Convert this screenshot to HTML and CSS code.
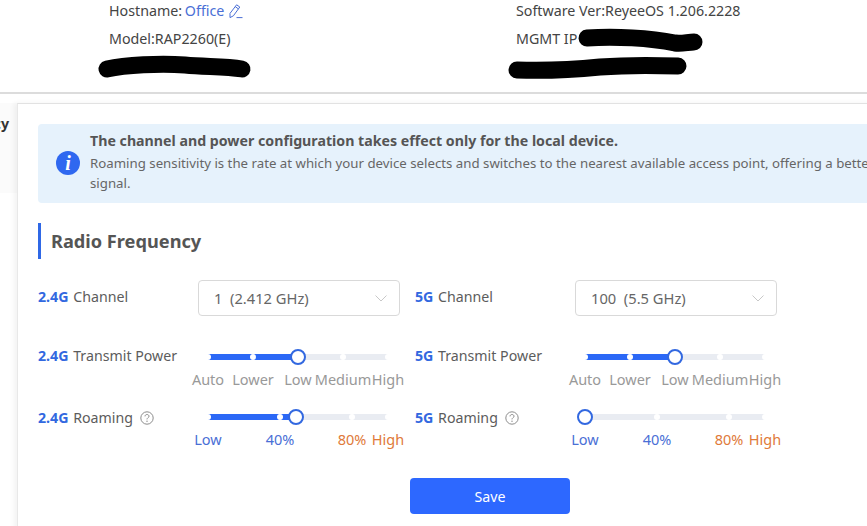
FILE: index.html
```html
<!DOCTYPE html>
<html lang="en">
<head>
<meta charset="utf-8">
<title>Radio Frequency</title>
<link rel="stylesheet" href="styles.css">
</head>
<body>
<header class="device">
  <div class="device-col device-col-left">
    <div class="device-row">Hostname: <a class="link">Office</a>
      <svg class="edit" viewBox="0 0 14 15" width="14" height="15"><path d="M1 13.6 1 9.4 7.6 .8 10.8 3 4.4 11.8 Z M6.2 2.6 9.4 4.9" fill="none" stroke="#4a6fd6" stroke-width="1"/><path d="M7.5 13.6H13.5" stroke="#4a6fd6" stroke-width="1"/></svg>
    </div>
    <div class="device-row">Model:RAP2260(E)</div>
  </div>
  <div class="device-col">
    <div class="device-row">Software Ver:ReyeeOS 1.206.2228</div>
    <div class="device-row">MGMT IP</div>
  </div>
</header>
<svg class="redactions" viewBox="0 0 867 92" width="867" height="92">
  <path d="M107 69C125 65 160 63 185 65C205 67 225 66 242 69" />
  <path d="M587 38C615 36 650 38 675 43C682 44 688 42 694 42" />
  <path d="M517 70C545 71 570 70 600 67C625 65 650 65 678 66" />
</svg>
<main class="main">
  <aside class="side"><span class="side-text">Frequency</span></aside>
  <section class="card">
    <div class="notice">
      <svg class="notice-icon" viewBox="0 0 24 24" width="24" height="24"><circle cx="12" cy="12" r="12" fill="#2f68f0"/><text x="12" y="18.5" class="notice-i">i</text></svg>
      <div>
        <div class="notice-title">The channel and power configuration takes effect only for the local device.</div>
        <div class="notice-text">Roaming sensitivity is the rate at which your device selects and switches to the nearest available access point, offering a better<br>signal.</div>
      </div>
    </div>
    <h2 class="heading">Radio Frequency</h2>
    <div class="grid">
      <div class="field field-select">
        <div class="label"><b>2.4G</b> Channel</div>
        <div class="select"><span>1&nbsp;&nbsp;(2.412 GHz)</span><svg viewBox="0 0 12 7" width="12" height="7"><path d="M.5.5 6 6 11.5.5" fill="none" stroke="#c8c8c8"/></svg></div>
      </div>
      <div class="field field-select">
        <div class="label"><b>5G</b> Channel</div>
        <div class="select"><span>100&nbsp;&nbsp;(5.5 GHz)</span><svg viewBox="0 0 12 7" width="12" height="7"><path d="M.5.5 6 6 11.5.5" fill="none" stroke="#c8c8c8"/></svg></div>
      </div>

      <div class="field field-power">
        <div class="label"><b>2.4G</b> Transmit Power</div>
        <div class="slider">
          <div class="rail">
            <i class="fill" style="width:50%"></i>
            <i class="dot" style="left:0%"></i><i class="dot" style="left:25%"></i><i class="dot" style="left:75%"></i><i class="dot" style="left:100%"></i>
            <i class="handle" style="left:50%"></i>
          </div>
          <div class="marks marks-power"><span>Auto</span><span>Lower</span><span>Low</span><span>Medium</span><span>High</span></div>
        </div>
      </div>
      <div class="field field-power">
        <div class="label"><b>5G</b> Transmit Power</div>
        <div class="slider">
          <div class="rail">
            <i class="fill" style="width:50%"></i>
            <i class="dot" style="left:0%"></i><i class="dot" style="left:25%"></i><i class="dot" style="left:75%"></i><i class="dot" style="left:100%"></i>
            <i class="handle" style="left:50%"></i>
          </div>
          <div class="marks marks-power"><span>Auto</span><span>Lower</span><span>Low</span><span>Medium</span><span>High</span></div>
        </div>
      </div>

      <div class="field field-roam">
        <div class="label"><b>2.4G</b> Roaming
          <svg class="help" viewBox="0 0 14 14" width="14" height="14"><circle cx="7" cy="7" r="6.2" fill="none" stroke="#8c8c8c"/><path d="M5 5.4C5 4.2 5.9 3.5 7 3.5S9 4.2 9 5.3C9 6.6 7 6.7 7 8.4" fill="none" stroke="#8c8c8c"/><circle cx="7" cy="10.2" r=".7" fill="#8c8c8c"/></svg>
        </div>
        <div class="slider">
          <div class="rail">
            <i class="fill" style="width:48.9%"></i>
            <i class="dot" style="left:0%"></i><i class="dot" style="left:40%"></i><i class="dot" style="left:80%"></i><i class="dot" style="left:100%"></i>
            <i class="handle" style="left:48.9%"></i>
          </div>
          <div class="marks marks-roam"><span class="blue">Low</span><span class="blue">40%</span><span class="orange">80%</span><span class="orange">High</span></div>
        </div>
      </div>
      <div class="field field-roam">
        <div class="label"><b>5G</b> Roaming
          <svg class="help" viewBox="0 0 14 14" width="14" height="14"><circle cx="7" cy="7" r="6.2" fill="none" stroke="#8c8c8c"/><path d="M5 5.4C5 4.2 5.9 3.5 7 3.5S9 4.2 9 5.3C9 6.6 7 6.7 7 8.4" fill="none" stroke="#8c8c8c"/><circle cx="7" cy="10.2" r=".7" fill="#8c8c8c"/></svg>
        </div>
        <div class="slider">
          <div class="rail">
            <i class="dot" style="left:40%"></i><i class="dot" style="left:80%"></i><i class="dot" style="left:100%"></i>
            <i class="handle" style="left:0%"></i>
          </div>
          <div class="marks marks-roam"><span class="blue">Low</span><span class="blue">40%</span><span class="orange">80%</span><span class="orange">High</span></div>
        </div>
      </div>
    </div>
    <div class="actions"><button class="save" type="button">Save</button></div>
  </section>
</main>
</body>
</html>
```
FILE: styles.css
```css
* { box-sizing: border-box; }
html, body { margin: 0; height: 526px; width: 867px; overflow: hidden; background: #fff; }
body {
  position: relative;
  font-family: "Noto Sans", "Open Sans", sans-serif;
  font-size: 14.2px;
  color: #5c5c5c;
}
.device {
  display: flex;
  height: 94px;
  padding-left: 109px;
  border-bottom: 2px solid #dcdcdc;
  color: #444;
  font-size: 14.25px;
}
.device-col { display: flex; flex-direction: column; gap: 8px; margin-top: 1px; }
.device-col-left { width: 407px; }
.device-row { line-height: 20px; white-space: nowrap; }
.link { color: #4a6fd6; margin-left: -1px; }
.edit { vertical-align: -3px; margin-left: 1px; }
.redactions { position: absolute; left: 0; top: 0; fill: none; stroke: #000; stroke-width: 17px; stroke-linecap: round; }
.main { display: flex; padding-top: 9px; background: #fff; height: 432px; }
.side {
  width: 17px;
  flex: none;
  overflow: hidden;
  display: flex;
  justify-content: flex-end;
  background: #fbfbfb;
  padding-top: 11px;
  height: 90px;
}
.side-text { font-weight: 700; color: #333; white-space: nowrap; line-height: 20px; margin-right: 8px; }
.card {
  flex: none;
  width: 946px;
  height: 440px;
  padding: 20px 21px 0 20px;
  border-top: 1px solid #e2e2e2;
  border-left: 1px solid #e8e8e8;
  box-shadow: -3px 0 5px rgba(0, 0, 0, .05);
  background: #fff;
}
.notice {
  display: flex;
  align-items: flex-start;
  gap: 10px;
  height: 79px;
  padding: 7px 0 0 18px;
  background: #e6f2fc;
  border-radius: 4px;
}
.notice-icon { flex: none; margin-top: 20px; }
.notice-i { font: italic 700 20px "Liberation Serif", serif; fill: #fff; text-anchor: middle; }
.notice-title { font-weight: 700; color: #555; line-height: 20px; }
.notice-text { font-size: 13.25px; line-height: 20px; color: #666; white-space: nowrap; margin-top: 2px; }
.heading {
  margin: 20px 0 0;
  height: 36px;
  padding-left: 10px;
  border-left: 3px solid #2f68e6;
  font-size: 18.2px;
  font-weight: 700;
  line-height: 36px;
  color: #555;
}
.grid { display: grid; grid-template-columns: 377px 377px; }
.field { display: flex; }
.label { width: 160px; flex: none; line-height: 20px; white-space: nowrap; }
.label b { color: #3268e0; font-weight: 700; margin-right: 1px; }
.help { vertical-align: -2px; margin-left: 3px; }
.field-select { margin-top: 21px; height: 36px; }
.field-select .label { margin-top: 7px; }
.field-power { margin-top: 30px; height: 48px; }
.field-roam { margin-top: 12px; height: 44px; }
.field-roam .label { margin-top: 2px; }
.select {
  width: 202px;
  height: 36px;
  display: flex;
  align-items: center;
  justify-content: space-between;
  padding: 0 12px 0 15px;
  border: 1px solid #d9d9d9;
  border-radius: 4px;
  color: #666;
  font-size: 14.7px;
}
.slider { width: 180px; margin-left: 10px; padding-top: 8px; }
.rail { position: relative; height: 6px; width: 180px; background: #e9ecf2; }
.fill { position: absolute; left: 0; top: 0; height: 6px; background: #2b68f6; }
.dot { position: absolute; top: 0; width: 6px; height: 6px; margin-left: -3px; background: #fff; border-radius: 50%; }
.handle {
  position: absolute;
  top: -5px;
  width: 16px;
  height: 16px;
  margin-left: -8px;
  background: #fff;
  border: 2px solid #3268e0;
  border-radius: 50%;
}
.marks { display: flex; margin-top: 9px; line-height: 20px; font-size: 14.5px; }
.marks span { width: 0; display: flex; justify-content: center; white-space: nowrap; color: #999; }
.marks-power { gap: 45px; }
.marks-roam span:nth-child(2), .marks-roam span:nth-child(3) { margin-left: 72px; }
.marks-roam span:nth-child(4) { margin-left: 36px; }
.marks .blue { color: #4a6fd6; }
.marks .orange { color: #e07a3a; }
.actions { display: flex; justify-content: center; margin-top: 28px; }
.save {
  width: 160px;
  height: 36px;
  border: 0;
  border-radius: 4px;
  background: #2d68ff;
  color: #fff;
  font: inherit;
}
```
